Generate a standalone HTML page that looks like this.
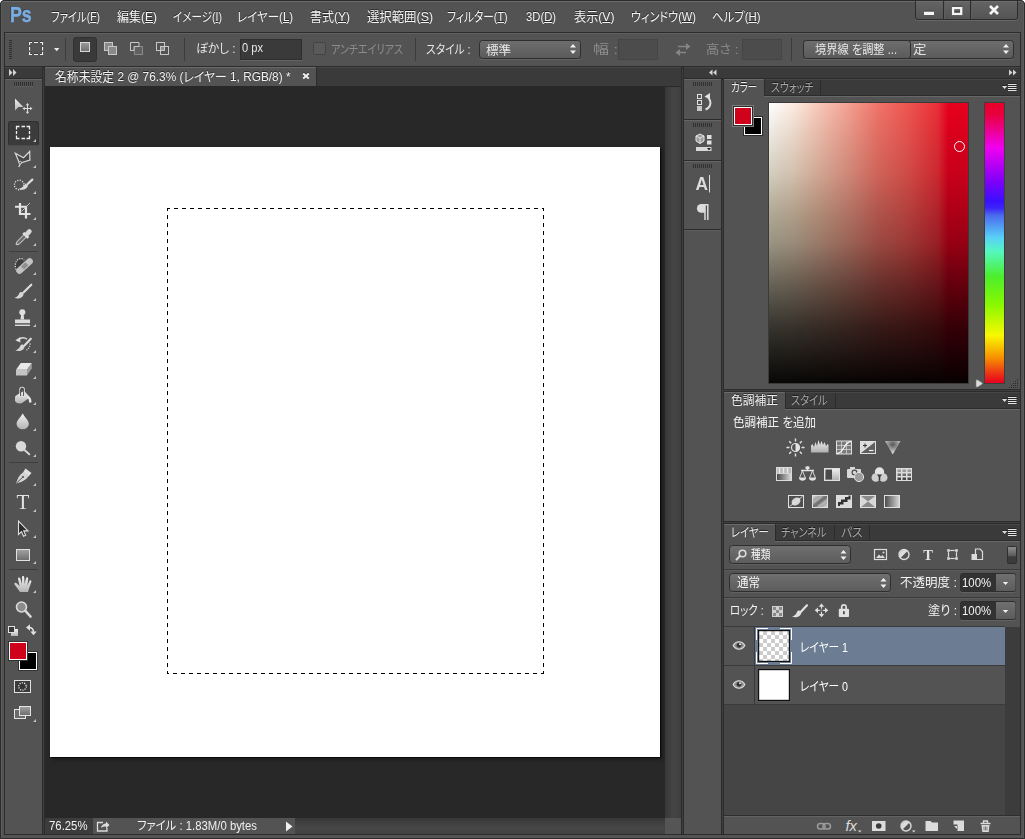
<!DOCTYPE html>
<html lang="ja">
<head>
<meta charset="utf-8">
<title>Photoshop</title>
<style>
*{box-sizing:border-box;margin:0;padding:0}
html,body{width:1025px;height:839px;overflow:hidden;background:#535353}
body{position:relative;font-family:"Liberation Sans","Noto Sans CJK JP",sans-serif;font-size:12px;color:#e6e6e6;line-height:1}
.a{position:absolute}
.t{position:absolute;font-feature-settings:"palt";white-space:nowrap;transform-origin:0 50%;line-height:16px;height:16px}
.menu .t{top:9px;font-size:13px;color:#f4f4f4;text-shadow:0 -1px 0 rgba(0,0,0,.55)}
.sh{text-shadow:0 -1px 0 rgba(0,0,0,.55)}
u{text-decoration:underline;text-underline-offset:1px}
.sep{position:absolute;width:1px;background:#3c3c3c}
.grip{position:absolute;background:repeating-linear-gradient(90deg,#303030 0 1px,transparent 1px 2px)}
.gripv{position:absolute;background:repeating-linear-gradient(180deg,#303030 0 1px,transparent 1px 2px)}
.tool{position:absolute;left:9px;width:30px;height:24px}
.corner{position:absolute;width:0;height:0;border-left:3px solid transparent;border-bottom:3px solid #c8c8c8}
</style>
</head>
<body>
<!-- window frame -->
<div class="a" id="frame" style="left:0;top:0;width:1025px;height:839px;background:#535353;border:1px solid #2c2c2c;border-radius:4px 4px 0 0;box-shadow:inset 0 1px 0 #6a6a6a,inset 1px 0 0 #5c5c5c,inset -1px 0 0 #5c5c5c"></div>
<div class="a" style="left:0;top:0;width:4px;height:4px;background:radial-gradient(circle at 100% 100%,transparent 3.600px,#fff 4.200px)"></div>
<div class="a" style="left:1021px;top:0;width:4px;height:4px;background:radial-gradient(circle at 0 100%,transparent 3.600px,#fff 4.200px)"></div>
<div class="a" style="left:4px;top:32px;width:1017px;height:803px;border:1px solid #2c2c2c;background:#2c2c2c"></div>
<!-- window buttons -->
<div class="a" style="left:915px;top:0;width:103px;height:20px;background:linear-gradient(180deg,#646464,#545454);border:1px solid #2c2c2c;border-radius:0 0 3px 3px;box-shadow:0 1px 0 #676767, inset 0 1px 0 #6e6e6e"></div>
<div class="a" style="left:943px;top:1px;width:1px;height:18px;background:#2c2c2c;box-shadow:1px 0 0 #5e5e5e"></div>
<div class="a" style="left:970px;top:1px;width:1px;height:18px;background:#2c2c2c;box-shadow:1px 0 0 #5e5e5e"></div>
<svg class="a" style="left:915px;top:0" width="103" height="20" viewBox="915 0 103 20" fill="none">
  <rect x="924" y="10.700" width="10" height="1" fill="#2a2a2a" opacity="0.600"/><rect x="924" y="11.700" width="10" height="3.300" fill="#f4f4f4"/>
  <rect x="953.100" y="8" width="8.100" height="5.900" stroke="#f4f4f4" stroke-width="2.300"/>
  <path d="M952 6.200h10.300M954.400 11.900h5.300" stroke="#2a2a2a" stroke-width="1" opacity="0.600"/>
  <path d="M990 6l8 8M998 6l-8 8" stroke="#f4f4f4" stroke-width="2.600"/>
</svg>

<!-- MENU BAR -->
<div class="a menu" id="menubar" style="left:0;top:0;width:1025px;height:32px">
  <div class="t" style="transform:scaleX(0.8020);left:10.15px;top:3px;height:24px;line-height:24px;font-size:22px;font-weight:bold;color:#78aee4;-webkit-text-stroke:0.4px #78aee4;text-shadow:-1px -1px 0 rgba(0,0,0,.3)">Ps</div>
  <div class="t" style="transform:scaleX(0.7947);left:51.00px;">ファイル(<u>F</u>)</div>
  <div class="t" style="transform:scaleX(0.9231);left:117.05px;">編集(<u>E</u>)</div>
  <div class="t" style="transform:scaleX(0.8116);left:173.00px;">イメージ(<u>I</u>)</div>
  <div class="t" style="transform:scaleX(0.8840);left:237.25px;">レイヤー(<u>L</u>)</div>
  <div class="t" style="transform:scaleX(0.9231);left:310.05px;">書式(<u>Y</u>)</div>
  <div class="t" style="transform:scaleX(0.9518);left:367.00px;">選択範囲(<u>S</u>)</div>
  <div class="t" style="transform:scaleX(0.8223);left:447.15px;">フィルター(<u>T</u>)</div>
  <div class="t" style="transform:scaleX(0.8658);left:526.05px;">3D(<u>D</u>)</div>
  <div class="t" style="transform:scaleX(0.9342);left:574.00px;">表示(<u>V</u>)</div>
  <div class="t" style="transform:scaleX(0.8529);left:631.15px;">ウィンドウ(<u>W</u>)</div>
  <div class="t" style="transform:scaleX(0.8765);left:712.10px;">ヘルプ(<u>H</u>)</div>
</div>

<!-- OPTIONS BAR -->
<div class="a" id="optbar" style="left:5px;top:32px;width:1016px;height:35px;background:#535353;border-top:1px solid #2c2c2c;border-bottom:1px solid #2c2c2c;border-right:1px solid #2c2c2c;box-shadow:inset 0 1px 0 #606060"></div>
<div class="a" id="opt" style="left:0;top:0;width:1025px;height:67px">
  <div class="gripv" style="left:9px;top:40px;width:3px;height:20px"></div>
  <svg class="a" style="left:0;top:32px" width="1025" height="35" viewBox="0 32 1025 35" fill="none">
    <defs>
      <linearGradient id="gb" x1="0" y1="0" x2="0" y2="1"><stop offset="0" stop-color="#9a9a9a"/><stop offset="1" stop-color="#707070"/></linearGradient>
      <linearGradient id="gdd" x1="0" y1="0" x2="0" y2="1"><stop offset="0" stop-color="#6e6e6e"/><stop offset="1" stop-color="#5a5a5a"/></linearGradient>
    </defs>
    <path d="M29 41.500h3M34 41.500h4M40 41.500h3M29 53.500h3M34 53.500h4M40 53.500h3M28.500 42v3M28.500 47v3.500M28.500 52v2M41.500 42v3M41.500 47v3.500M41.500 52v2" stroke="#2e2e2e" stroke-width="1" opacity="0.700"/><path d="M29 42.500h3M34 42.500h4M40 42.500h3M29 54.500h3M34 54.500h4M40 54.500h3M29.500 42v3M29.500 47v3.500M29.500 52v3M42.500 42v3M42.500 47v3.500M42.500 52v3" stroke="#f0f0f0" stroke-width="1.200"/>
    <path d="M54 48h5.400l-2.700 3.200z" fill="#ececec"/>
    <!-- selected mode button -->
    <rect x="73.500" y="37.500" width="23" height="24" rx="2.500" fill="#3a3a3a" stroke="#303030"/>
    <rect x="80.500" y="42.500" width="9" height="9" fill="url(#gb)" stroke="#d8d8d8"/>
    <!-- add -->
    <rect x="104.500" y="42.500" width="8" height="8" fill="#8a8a8a" stroke="#c8c8c8"/>
    <rect x="108.500" y="46.500" width="8" height="8" fill="#8a8a8a" stroke="#c8c8c8"/>
    <!-- subtract -->
    <rect x="134.500" y="46.500" width="8" height="8" fill="#606060" stroke="#8a8a8a"/>
    <path d="M130.500 51v-8.500h8.500" stroke="#c8c8c8"/>
    <path d="M130.500 50.500h3.500v-4h5v-4" stroke="#c8c8c8" stroke-width="1"/>
    <!-- intersect -->
    <rect x="156.500" y="42.500" width="8" height="8" stroke="#c8c8c8"/>
    <rect x="160.500" y="46.500" width="8" height="8" stroke="#c8c8c8"/>
    <rect x="161" y="47" width="3" height="3" fill="#8a8a8a"/>
    <!-- feather input -->
    <rect x="240.500" y="39.500" width="61" height="20" fill="#3a3a3a" stroke="#2e2e2e"/>
    <path d="M240 60.500h62" stroke="#646464"/>
    <!-- checkbox -->
    <rect x="313.500" y="42.500" width="12" height="12" rx="2" fill="#5a5a5a" stroke="#424242"/>
    <!-- style dropdown -->
    <rect x="479.500" y="40.500" width="101" height="18" rx="3" fill="url(#gdd)" stroke="#2e2e2e"/>
    <path d="M480 59.500h100" stroke="#626262"/>
    <path d="M570 47.500h6l-3-3.500zM570 50.500h6l-3 3.500z" fill="#f0f0f0"/>
    <!-- width box -->
    <rect x="618.500" y="39.500" width="39" height="20" fill="#4c4c4c" stroke="#454545"/>
    <!-- swap -->
    <path d="M678 46.500h10M676 52.500h10" stroke="#858585" stroke-width="1.400"/>
    <path d="M686 43l4.500 3.500l-4.500 3.500zM680 49l-4.500 3.500l4.500 3.500z" fill="#858585"/>
    <!-- height box -->
    <rect x="742.500" y="39.500" width="39" height="20" fill="#4c4c4c" stroke="#454545"/>
    <!-- right dropdown -->
    <rect x="803.500" y="40.500" width="210" height="18" rx="3" fill="url(#gdd)" stroke="#2e2e2e"/>
    <path d="M804 59.500h209" stroke="#626262"/>
    <path d="M1003 47.500h6l-3-3.500zM1003 50.500h6l-3 3.500z" fill="#f0f0f0"/>
    <!-- refine edge button -->
    <rect x="803.500" y="40.500" width="107" height="18" rx="3" fill="url(#gdd)" stroke="#2e2e2e"/>
  </svg>
  <div class="sep" style="left:65px;top:38px;height:23px"></div>
  <div class="sep" style="left:184px;top:38px;height:23px"></div>
  <div class="sep" style="left:415px;top:38px;height:23px"></div>
  <div class="sep" style="left:791px;top:38px;height:23px"></div>
  <div class="t" style="transform:scaleX(0.9322);left:196.15px;top:40.5px;font-size:12.5px;">ぼかし :</div>
  <div class="t" style="transform:scaleX(0.8883);left:242.05px;top:40px;font-size:12.5px;">0 px</div>
  <div class="t" style="transform:scaleX(0.8031);left:331.10px;top:42px;font-size:12.5px;color:#8c8c8c">アンチエイリアス</div>
  <div class="t" style="transform:scaleX(0.8601);left:426.15px;top:42px;font-size:12.5px;">スタイル :</div>
  <div class="t" style="transform:scaleX(1.0070);left:486.10px;top:42.5px;font-size:12.5px;">標準</div>
  <div class="t" style="transform:scaleX(1.2794);left:593.10px;top:41.5px;font-size:12.5px;color:#8c8c8c">幅 :</div>
  <div class="t" style="transform:scaleX(1.0630);left:706.35px;top:41.5px;font-size:12.5px;color:#8c8c8c">高さ :</div>
  <div class="t" style="transform:scaleX(0.8977);left:815.15px;top:41.5px;font-size:12.5px;">境界線 を調整 ...</div>
  <div class="t" style="transform:scaleX(1.0739);left:913.10px;top:42px;font-size:12.5px;">定</div>
</div>

<!-- TOOLS PANEL -->
<div class="a" id="tools" style="left:5px;top:67px;width:38px;height:767px;background:#535353;border-right:1px solid #2c2c2c">
  <div class="a" style="left:0;top:0;width:37px;height:11px;background:#3a3a3a;border-top:1px solid #454545"></div>
  <div class="a" style="left:0;top:11px;width:37px;height:1px;background:#2c2c2c"></div>
  <div class="a" style="left:0;top:12px;width:37px;height:1px;background:#656565"></div>
  <svg class="a" style="left:4px;top:2px" width="8" height="7" viewBox="0 0 8 7"><path d="M0 0L3.5 3.5L0 7zM4 0L7.5 3.5L4 7z" fill="#d4d4d4"/></svg>
  <div class="grip" style="left:9px;top:15px;width:20px;height:4px"></div>
  <div class="a" style="left:9px;top:19px;width:20px;height:1px;background:repeating-linear-gradient(90deg,#6a6a6a 0 1px,transparent 1px 2px)"></div>
  <!-- selected tool bg -->
  <div class="a" style="left:3px;top:54px;width:31px;height:25px;background:#3b3b3b;border-radius:3px;border:1px solid #303030;border-bottom-color:#4a4a4a"></div>
  <!-- separators -->
  <div class="a" style="left:4px;top:184px;width:29px;height:1px;background:#3e3e3e"></div>
  <div class="a" style="left:4px;top:395px;width:29px;height:1px;background:#3e3e3e"></div>
  <div class="a" style="left:4px;top:502px;width:29px;height:1px;background:#3e3e3e"></div>
  <svg class="a" style="left:0;top:0" width="38" height="768" viewBox="5 67 38 768" fill="none">
    <defs>
      <linearGradient id="gm" x1="0" y1="0" x2="0" y2="1"><stop offset="0" stop-color="#f2f2f2"/><stop offset="1" stop-color="#b4b4b4"/></linearGradient>
    </defs>
    <!-- move -->
    <path d="M15 98.5V110.5L18.5 107H23.5z" fill="url(#gm)"/>
    <path d="M27.500 104v9M23 108.500h9" stroke="#dcdcdc" stroke-width="1"/>
    <path d="M25.800 105.300l1.700-2.300l1.700 2.300zM25.800 111.700l1.700 2.300l1.700-2.300zM24.800 106.800l-2.300 1.700l2.300 1.700zM30.200 106.800l2.300 1.700l-2.300 1.700z" fill="#dcdcdc"/>
    <!-- marquee -->
    <path d="M16 126.500h3.500M21.500 126.500h3.500M26.500 126.500h3.500M16 138.500h3.500M21.500 138.500h3.500M26.500 138.500h3.500M16.500 126v3.500M16.500 131v3M16.500 135.500v3.500M29.500 126v3.500M29.500 131v3M29.500 135.500v3.500" stroke="#efefef" stroke-width="1.300"/>
    <!-- lasso poly -->
    <path d="M15.300 153.200L23.500 157.700L29.700 151.500L29.900 160L19.500 163.300z" stroke="#dcdcdc" stroke-width="1.200" fill="#474747"/>
    <path d="M20.500 163.500L18.700 167" stroke="#dcdcdc" stroke-width="1.200"/>
    <circle cx="20.300" cy="162.600" r="1.300" stroke="#dcdcdc" stroke-width="0.900" fill="#535353"/>
    <!-- quick select -->
    <circle cx="19.200" cy="185" r="4.800" stroke="#f0f0f0" stroke-width="1.300" stroke-dasharray="1.100 1.410"/>
    <path d="M32.300 179.600L27.600 184" stroke="#dcdcdc" stroke-width="2.300" stroke-linecap="round"/>
    <path d="M18.300 188.700c3.500-0.300 5.800-2.300 7.200-5.200l2.600 2.200c-1 3.300-5.300 5.200-9.800 3z" fill="#dadada"/>
    <!-- crop -->
    <path d="M20 203V214H30.500M15 206.750H26V218.500" stroke="#e4e4e4" stroke-width="2.200"/>
    <path d="M30 203L21.500 211.500" stroke="#d0d0d0" stroke-width="0.900"/>
    <!-- eyedropper -->
    <path d="M25 233.500L17.300 241.300L16 244.200L16.800 245L19.700 243.700L27.500 236z" stroke="#dedede" stroke-width="1" fill="#6e6e6e"/>
    <path d="M23.300 232.800l5 5" stroke="#e4e4e4" stroke-width="2.600"/>
    <path d="M26.800 234.200l2.600-2.800" stroke="#d8d8d8" stroke-width="4.600" stroke-linecap="round"/>
    <!-- healing -->
    <path d="M17.500 271.500a5.200 6.800 0 0 1 6.500-11.500z" fill="#3e3e3e"/>
    <path d="M17.500 271.500a5.200 6.800 0 0 1 6.500-11.500" stroke="#f0f0f0" stroke-width="1.200" stroke-dasharray="1.100 1.300"/>
    <path d="M19.500 270.700L29.700 261.300" stroke="#c2c2c2" stroke-width="6.400" stroke-linecap="round"/>
    <path d="M22.300 268.200l4.700-4.400" stroke="#9a9a9a" stroke-width="4.500"/>
    <path d="M22.600 266.500l3.600-3.300M23.900 267.800l3.500-3.200" stroke="#6c6c6c" stroke-width="0.900" stroke-dasharray="0.900 0.900"/>
    <!-- brush -->
    <path d="M31.300 284.700L23.500 292.500" stroke="#dedede" stroke-width="2.100" stroke-linecap="round"/>
    <path d="M14.300 297.800c2.500-0.500 4-2 5-4.500c0.800-1.500 2.500-1.800 3.500-0.800c1.200 1.200 0.800 2.800-0.300 4c-2.200 2.200-5.800 2.600-8.200 1.300z" fill="#d6d6d6"/>
    <!-- stamp -->
    <circle cx="22.300" cy="312.200" r="3" fill="#e0e0e0"/>
    <path d="M21.200 314h2.300l0.700 5.500h-3.700z" fill="#e0e0e0"/>
    <rect x="15" y="319.500" width="15" height="3.700" fill="#dcdcdc"/>
    <rect x="15" y="324.600" width="15" height="1.400" fill="#dcdcdc"/>
    <!-- history brush -->
    <path d="M30.800 338.700L24.500 345.500" stroke="#dedede" stroke-width="2.100" stroke-linecap="round"/>
    <path d="M15.300 350.300c2.500-0.500 4-2 5-4.500c0.800-1.500 2.500-1.800 3.500-0.800c1.200 1.200 0.800 2.800-0.300 4c-2.200 2.200-5.800 2.600-8.200 1.300z" fill="#d6d6d6"/>
    <path d="M18.500 339.500c2.500-2 6-2 8.500-0.300" stroke="#dcdcdc" stroke-width="1.400"/>
    <path d="M15.300 340.300l5-3.300v5.500z" fill="#dcdcdc"/>
    <path d="M26.500 350c2-1 3.500-3.500 3.500-6.500" stroke="#f0f0f0" stroke-width="1.200" stroke-dasharray="1 1.200"/>
    <!-- eraser -->
    <path d="M20.800 363h11l-4.800 6.700h-11z" fill="#e8e8e8"/>
    <path d="M16 369.700h11v5.800h-11z" fill="#c4c4c4"/>
    <path d="M27 369.700l4.800-6.700v5.300l-4.800 7.200z" fill="#9c9c9c"/>
    <!-- bucket -->
    <path d="M15 397.500c0-1 0.500-1.500 1.500-2.200l7.500-4.500l6 6.500l-7.500 5.500c-2 1.300-7.500 0.500-7.500-2.300z" fill="url(#gm)"/>
    <path d="M20 396.500v-7a2.100 2.100 0 0 1 4.200 0v7.500" stroke="#ececec" stroke-width="1.300"/>
    <path d="M20.600 396v-6.500a1.500 1.500 0 0 1 3 0v6.500" stroke="#3c3c3c" stroke-width="0.900"/>
    <path d="M27.500 396c2.500 0.500 4 2.500 4 5.500a1.300 1.300 0 0 1-2.600 0c0-1.800-0.200-3-2-3.800z" fill="#e8e8e8"/>
    <!-- blur -->
    <path d="M22.700 413.500c2 3.700 6.100 6.500 6.100 10.500a6.100 5.200 0 0 1-12.200 0c0-4 4.100-6.800 6.100-10.500z" fill="url(#gm)"/>
    <!-- dodge -->
    <circle cx="21" cy="446.300" r="5.200" fill="#d8d8d8"/>
    <path d="M24.500 450l4.800 4.300" stroke="#d8d8d8" stroke-width="1.900" stroke-linecap="round"/>
    <!-- pen -->
    <path d="M25.500 468.500l6 4.500l-3 3.500l-5.500-4z" fill="#e0e0e0"/>
    <path d="M23.500 472l5 3.800c-1 3-5 6-12.500 7.700c1.500-5 3.500-9 7.500-11.500z" fill="#d4d4d4"/>
    <path d="M16.500 483l6-5.500" stroke="#535353" stroke-width="1"/>
    <circle cx="23" cy="477" r="1.100" fill="#535353"/>
    <!-- T -->
    <text x="23" y="509.200" font-family="'Liberation Serif',serif" font-size="21" text-anchor="middle" fill="#e4e4e4">T</text>
    <!-- path select -->
    <path d="M18.500 521v13.500l3-2.800l2 4.500l2.200-1l-2-4.300h4.300z" fill="#2a2a2a" stroke="#e0e0e0" stroke-width="1.100"/>
    <!-- rectangle -->
    <rect x="16.500" y="549.500" width="13" height="11" fill="url(#gr)" stroke="#e0e0e0" stroke-width="1"/>
    <linearGradient id="gr" x1="0" y1="0" x2="0" y2="1"><stop offset="0" stop-color="#a2a2a2"/><stop offset="1" stop-color="#6c6c6c"/></linearGradient>
    <!-- hand -->
    <path d="M20 592L14.600 584.600c-0.800-1.200 0.600-2.400 1.700-1.500L19.600 586L18 578.800c-0.300-1.500 1.800-2 2.200-0.500L22 584L22 577c0-1.500 2.200-1.500 2.200 0L24.600 584L26 578.200c0.400-1.500 2.500-1 2.200 0.500L27.400 585.500L29.300 581c0.600-1.400 2.600-0.600 2.100 0.800C30 586 28.800 589 28 592z" fill="url(#gm)"/>
    <!-- zoom -->
    <circle cx="21.500" cy="607" r="5" fill="#8c8c8c" stroke="#dcdcdc" stroke-width="1.600"/>
    <path d="M25.500 611l5 5.500" stroke="#dcdcdc" stroke-width="2.600" stroke-linecap="round"/>
    <!-- default colours / swap -->
    <rect x="11" y="629" width="7" height="7" fill="url(#gm)"/>
    <rect x="8.500" y="626.500" width="6" height="6" fill="#3a3a3a" stroke="#e0e0e0" stroke-width="1"/>
    <path d="M29 627.500c3 0 4.500 1.500 4.500 5" stroke="#e0e0e0" stroke-width="1.600"/>
    <path d="M26 627.500l4-3.200v6.400zM30.300 631.500h6.400l-3.200 3.800z" fill="#e0e0e0"/>
    <!-- bg/fg colours -->
    <rect x="18.500" y="651.500" width="19" height="19" stroke="#333" fill="none"/><rect x="19.500" y="652.500" width="17" height="17" fill="#000" stroke="#fff" stroke-width="1"/>
    <rect x="8.500" y="641.500" width="19" height="19" stroke="#333" fill="none"/><rect x="9.500" y="642.500" width="17" height="17" fill="#d0021b" stroke="#fff" stroke-width="1"/>
    
    <!-- quick mask -->
    <rect x="14.500" y="680.500" width="16" height="12" stroke="#e0e0e0" stroke-width="1" fill="#3c3c3c"/>
    <circle cx="22.500" cy="686.500" r="3.700" stroke="#f4f4f4" stroke-width="1.300" stroke-dasharray="1.100 1.224" fill="#333"/>
    <!-- screen mode -->
    <rect x="14.500" y="709.500" width="11" height="9" stroke="#e4e4e4" stroke-width="1" fill="#6c6c6c"/>
    <rect x="19.500" y="706.500" width="11" height="9" stroke="#e4e4e4" stroke-width="1" fill="url(#gr)"/>
    <!-- corner markers -->
    <g fill="#c4c4c4">
      <path d="M36 139v3h-3zM36 165v3h-3zM36 191v3h-3zM36 217v3h-3zM36 243v3h-3zM36 272v3h-3zM36 298v3h-3zM36 324v3h-3zM36 350v3h-3zM36 376v3h-3zM36 402v3h-3zM36 428v3h-3zM36 454v3h-3zM36 483v3h-3zM36 509v3h-3zM36 535v3h-3zM36 561v3h-3zM36 590v3h-3zM36 719v3h-3z"/>
    </g>
  </svg>
</div>

<!-- DOCUMENT -->
<div class="a" id="doc" style="left:44px;top:67px;width:639px;height:768px;background:#282828;border-left:1px solid #2c2c2c;border-right:2px solid #2c2c2c;border-bottom:1px solid #2c2c2c">
</div>
<div class="a" id="docin" style="left:0;top:0;width:0;height:0">
  <!-- tab bar -->
  <div class="a" style="left:45px;top:67px;width:636px;height:19px;background:#3a3a3a;border-top:1px solid #474747"></div>
  <div class="a" style="left:45px;top:67px;width:271px;height:19px;background:#535353;border-top:1px solid #6b6b6b"></div>
  <div class="a" style="left:316px;top:67px;width:1px;height:19px;background:#2c2c2c"></div>
  <div class="t sh" style="transform:scaleX(0.9102);left:55.00px;top:69px;font-size:13px;color:#f0f0f0">名称未設定 2 @ 76.3% (レイヤー 1, RGB/8) *</div>
  <svg class="a" style="left:302px;top:72px" width="8" height="8" viewBox="0 0 8 8"><path d="M1.200 0.500L6.800 5.500M6.800 0.500L1.200 5.500" stroke="#2a2a2a" stroke-width="1.900" opacity="0.700"/><path d="M1.200 1.500L6.800 6.500M6.800 1.500L1.200 6.500" stroke="#f0f0f0" stroke-width="1.900"/></svg>
  <!-- scrollbars -->
  <div class="a" style="left:665px;top:87px;width:16px;height:731px;background:linear-gradient(90deg,#383838,#454545 55%,#3e3e3e)"></div>
  <div class="a" style="left:295px;top:818px;width:370px;height:16px;background:linear-gradient(180deg,#383838,#464646 60%,#424242)"></div>
  <div class="a" style="left:665px;top:818px;width:16px;height:16px;background:#555"></div>
  <!-- status -->
  <div class="a" style="left:45px;top:818px;width:48px;height:16px;background:#3c3c3c"></div>
  <div class="a" style="left:93px;top:818px;width:202px;height:16px;background:#535353"></div>
  <div class="t" style="transform:scaleX(0.9460);left:49.00px;top:818px;font-size:12px;color:#f0f0f0">76.25%</div>
  <div class="t" style="transform:scaleX(0.9454);left:137.10px;top:818px;font-size:12px;color:#f0f0f0">ファイル : 1.83M/0 bytes</div>
  <svg class="a" style="left:95px;top:819px" width="16" height="14" viewBox="95 819 16 14" fill="none"><path d="M103 822.500h-5.500v8.500h9.500v-3" stroke="#dcdcdc" stroke-width="1.300"/><path d="M101 828c0.500-3 2.500-4.500 5-4.500v-2l3.500 3.500l-3.500 3.500v-2c-2 0-3.500 0.200-5 1.500z" fill="#dcdcdc"/></svg>
  <svg class="a" style="left:285px;top:821px" width="8" height="11" viewBox="0 0 8 11"><path d="M1 0.500L7.500 5.500L1 10.500z" fill="#f0f0f0"/></svg>
  <!-- canvas -->
  <div class="a" style="left:50px;top:147px;width:610px;height:610px;background:#fff;box-shadow:1px 1px 0 rgba(0,0,0,.55),2px 2px 4px rgba(0,0,0,.5)"></div>
  <svg class="a" style="left:167px;top:208px" width="377" height="466" viewBox="167 208 377 466" shape-rendering="crispEdges" fill="none" stroke="#000" stroke-width="1" stroke-dasharray="4 4">
    <path d="M167 208.500H544" stroke-dashoffset="1"/>
    <path d="M167.500 208V674" stroke-dashoffset="1"/>
    <path d="M543.500 208V674" stroke-dashoffset="1"/>
    <path d="M167 673.500H544" stroke-dashoffset="2"/>
  </svg>
</div>

<!-- RIGHT DOCK -->
<div class="a" id="dock" style="left:684px;top:67px;width:336px;height:768px;background:#2c2c2c"></div>
<div class="a" id="dockin" style="left:0;top:0;width:0;height:0">
  <!-- header -->
  <div class="a" style="left:684px;top:67px;width:336px;height:11px;background:#3a3a3a;border-top:1px solid #454545"></div>
  <svg class="a" style="left:709px;top:69px" width="8" height="7" viewBox="0 0 8 7"><path d="M3.500 0.500L0 3.500L3.500 6.500zM7.500 0.500L4 3.500L7.500 6.500z" fill="#d4d4d4"/></svg>
  <svg class="a" style="left:1009px;top:69px" width="8" height="7" viewBox="0 0 8 7"><path d="M0 0.500L3.500 3.500L0 6.500zM4 0.500L7.500 3.500L4 6.500z" fill="#d4d4d4"/></svg>
  <!-- icon column -->
  <div class="a" style="left:684px;top:79px;width:37px;height:755px;background:#535353"></div>
  <div class="a" style="left:684px;top:79px;width:37px;height:1px;background:#666"></div>
  <div class="a" style="left:684px;top:119px;width:37px;height:1px;background:#2c2c2c"></div>
  <div class="a" style="left:684px;top:120px;width:37px;height:1px;background:#666"></div>
  <div class="a" style="left:684px;top:160px;width:37px;height:1px;background:#2c2c2c"></div>
  <div class="a" style="left:684px;top:161px;width:37px;height:1px;background:#666"></div>
  <div class="a" style="left:684px;top:229px;width:37px;height:1px;background:#2c2c2c"></div>
  <div class="a" style="left:684px;top:230px;width:37px;height:1px;background:#5e5e5e"></div>
  <div class="grip" style="left:693px;top:82px;width:20px;height:4px"></div>
  <div class="grip" style="left:693px;top:123px;width:20px;height:4px"></div>
  <div class="grip" style="left:693px;top:164px;width:20px;height:4px"></div>
  <svg class="a" style="left:684px;top:79px" width="37" height="160" viewBox="684 79 37 160" fill="none">
    <!-- history -->
    <rect x="697.500" y="94.500" width="4" height="4" stroke="#e0e0e0"/>
    <rect x="697.500" y="100.500" width="4" height="4" stroke="#e0e0e0"/>
    <rect x="697" y="106" width="5" height="5" fill="#c8c8c8"/>
    <path d="M705.500 109.500c4.500-1.500 6.500-6.500 3.500-11" stroke="#e0e0e0" stroke-width="1.900"/>
    <path d="M704.500 96.500l5.500-3.500v7z" fill="#e0e0e0"/>
    <!-- 3D -->
    <path d="M700 134l4 2v5l-4 2.500l-4-2.500v-5z" fill="#9a9a9a" stroke="#e8e8e8" stroke-width="1"/>
    <path d="M696 136l4 2l4-2M700 138v5.500" stroke="#e8e8e8" stroke-width="0.900"/>
    <rect x="707" y="135" width="4.500" height="4" fill="#e0e0e0"/>
    <rect x="707" y="140.500" width="4.500" height="4" fill="#e0e0e0"/>
    <rect x="696" y="147" width="15.500" height="4" fill="#d8d8d8"/>
    <path d="M707 148h4l-2 2.500z" fill="#222"/>
    <!-- A| -->
    <text x="695.500" y="190.300" font-family="'Liberation Sans',sans-serif" font-weight="bold" font-size="17.500" textLength="12.500" lengthAdjust="spacingAndGlyphs" fill="#dcdcdc">A</text>
    <path d="M709.500 175v17.500" stroke="#e0e0e0" stroke-width="1"/>
    <!-- pilcrow -->
    <path d="M701 204.800h7.500M705 204v16M707.800 204v16" stroke="#dcdcdc" stroke-width="1.500"/>
    <path d="M705 204.100h-3.800a4.300 4.300 0 0 0 0 8.600h3.800z" fill="#dcdcdc"/>
  </svg>

  <div class="a" style="left:682px;top:68px;width:1px;height:766px;background:#3e3e3e"></div>
  <div class="a" style="left:722px;top:80px;width:1px;height:754px;background:#3e3e3e"></div>
  <div class="a" style="left:43px;top:68px;width:1px;height:766px;background:#3e3e3e"></div>
  <!-- COLOR PANEL -->
  <div class="a" style="left:724px;top:79px;width:296px;height:310px;background:#535353"></div>
  <div class="a" style="left:724px;top:79px;width:296px;height:18px;background:#3a3a3a;border-top:1px solid #464646;box-shadow:inset 0 -1px 0 #676767,inset 0 -2px 0 #2c2c2c"></div>
  <div class="a" style="left:724px;top:79px;width:40px;height:18px;background:#535353;border-top:1px solid #6a6a6a"></div>
  <div class="a" style="left:764px;top:79px;width:1px;height:17px;background:#2c2c2c"></div>
  <div class="a" style="left:820px;top:80px;width:1px;height:15px;background:#2c2c2c"></div>
  <div class="t sh" style="transform:scaleX(0.7530);left:731.10px;top:80px;font-size:12.5px;color:#f0f0f0">カラー</div>
  <div class="t sh" style="transform:scaleX(0.7947);left:771.10px;top:80px;font-size:12.5px;color:#a6a6a6">スウォッチ</div>
  <!-- swatches -->
  <div class="a" style="left:743px;top:116px;width:20px;height:20px;background:#000;border:1px solid #2c2c2c;box-shadow:inset 0 0 0 1px #fff"></div>
  <div class="a" style="left:732px;top:105px;width:22px;height:22px;background:#d0021b;border:1px solid #7c7c7c;box-shadow:inset 0 0 0 1px #2c2c2c,inset 0 0 0 2px #fff"></div>
  <!-- field -->
  <div class="a" style="left:768px;top:102px;width:201px;height:282px;background:#3a3a3a"></div>
  <div class="a" style="left:769px;top:103px;width:199px;height:280px;background:linear-gradient(90deg,#fff 0%,#fcebe1 12%,#f8c8b9 25%,#f3a091 40%,#f07369 55%,#ee5550 70%,#ea2d37 85%,#e6001e 90%,#e6001e 100%)"></div>
  <div class="a" style="left:769px;top:103px;width:199px;height:280px;mix-blend-mode:multiply;background:linear-gradient(90deg,#ebe3c8 0%,#fff 70%);-webkit-mask-image:linear-gradient(180deg,transparent 0,#000 40%);mask-image:linear-gradient(180deg,transparent 0,#000 40%)"></div>
  <div class="a" style="left:769px;top:103px;width:199px;height:280px;background:linear-gradient(180deg,rgba(0,0,0,0) 0%,rgba(0,0,0,.13) 25%,rgba(0,0,0,.35) 50%,rgba(0,0,0,.57) 65%,rgba(0,0,0,.77) 80%,rgba(0,0,0,.97) 100%)"></div>
  <div class="a" style="left:954px;top:141px;width:11px;height:11px;border:1px solid #fff;border-radius:50%"></div>
  <!-- hue -->
  <div class="a" style="left:984px;top:102px;width:21px;height:282px;background:#3e3e3e"></div>
  <div class="a" style="left:985px;top:103px;width:19px;height:280px;background:linear-gradient(180deg,#e60028 0%,#e8003c 4%,#f000f0 16%,#8000f8 28%,#3a10ff 35%,#3c24f8 37.500%,#4a68ee 40%,#58d0f8 48%,#54f8c0 53%,#4cee2c 62%,#88f800 72%,#f8f800 83%,#f89000 91%,#ee3c14 96%,#e6001e 100%)"></div>
  <svg class="a" style="left:975px;top:379px" width="9" height="9" viewBox="0 0 9 9"><path d="M1 2c0-1 0.800-1.400 1.800-1l4 2.600c0.800 0.500 0.800 1.300 0 1.800l-4 2.600c-1 0.400-1.800 0-1.800-1z" fill="#dcdcdc" stroke="#7a7a7a" stroke-width="0.600"/></svg>
  <svg class="a" style="left:1008px;top:378px" width="11" height="11" viewBox="0 0 11 11" fill="#2a2a2a"><path d="M9 1h1v1h-1zM7 3h1v1h-1zM9 3h1v1h-1zM5 5h1v1h-1zM7 5h1v1h-1zM9 5h1v1h-1zM3 7h1v1h-1zM5 7h1v1h-1zM7 7h1v1h-1zM9 7h1v1h-1zM1 9h1v1h-1zM3 9h1v1h-1zM5 9h1v1h-1zM7 9h1v1h-1zM9 9h1v1h-1z"/></svg>

  <div class="a" style="left:723px;top:390px;width:297px;height:1px;background:#3e3e3e"></div>
  <div class="a" style="left:723px;top:522px;width:297px;height:1px;background:#3e3e3e"></div>
  <!-- ADJUSTMENTS PANEL -->
  <div class="a" style="left:724px;top:392px;width:296px;height:129px;background:#535353"></div>
  <div class="a" style="left:724px;top:392px;width:296px;height:18px;background:#3a3a3a;border-top:1px solid #464646;box-shadow:inset 0 -1px 0 #676767,inset 0 -2px 0 #2c2c2c"></div>
  <div class="a" style="left:724px;top:392px;width:61px;height:18px;background:#535353;border-top:1px solid #6a6a6a"></div>
  <div class="a" style="left:785px;top:392px;width:1px;height:17px;background:#2c2c2c"></div>
  <div class="a" style="left:835px;top:393px;width:1px;height:15px;background:#2c2c2c"></div>
  <div class="t sh" style="transform:scaleX(0.9402);left:731.10px;top:393px;font-size:12.5px;color:#f0f0f0">色調補正</div>
  <div class="t sh" style="transform:scaleX(0.8142);left:791.15px;top:393px;font-size:12.5px;color:#a6a6a6">スタイル</div>
  <div class="t" style="transform:scaleX(0.9226);left:733.10px;top:415px;font-size:12.5px;color:#f4f4f4">色調補正 を追加</div>

  <svg class="a" style="left:770px;top:436px" width="150" height="78" viewBox="770 436 150 78" fill="none">
    <defs>
      <linearGradient id="av" x1="0" y1="0" x2="0" y2="1"><stop offset="0" stop-color="#f0f0f0"/><stop offset="1" stop-color="#b0b0b0"/></linearGradient>
      <linearGradient id="ah" x1="0" y1="0" x2="1" y2="0"><stop offset="0" stop-color="#484848"/><stop offset="1" stop-color="#d8d8d8"/></linearGradient>
      <linearGradient id="ad" x1="0" y1="0" x2="1" y2="1"><stop offset="0" stop-color="#dcdcdc"/><stop offset="0.500" stop-color="#6e6e6e"/><stop offset="1" stop-color="#dcdcdc"/></linearGradient>
      <radialGradient id="avb" cx="0.500" cy="0.250" r="0.600"><stop offset="0" stop-color="#555"/><stop offset="1" stop-color="#d0d0d0"/></radialGradient>
    </defs>
    <!-- row 1 -->
    <g stroke="#e4e4e4" stroke-width="1.400">
      <path d="M795.500 438.500v3M795.500 453.500v3M786.500 447.500h3M801.500 447.500h3M789.200 441.200l2 2M799.800 451.800l2 2M801.800 441.200l-2 2M791.200 451.800l-2 2"/>
    </g>
    <circle cx="795.500" cy="447.500" r="4" stroke="#e4e4e4" stroke-width="1.200"/>
    <path d="M795.500 443.500a4 4 0 0 1 0 8z" fill="#e4e4e4"/>
    <path d="M811 452.500v-7l1.500-1.500l1.500 3l1.500-5l1.500 4l1.500-6l1.500 5l1.500-4l1.500 4l1.500-3l1.500 4l1.500-2l1 1v7.500z" fill="url(#av)"/>
    <rect x="836.500" y="441" width="15" height="13" fill="#7a7a7a" stroke="#e0e0e0"/>
    <path d="M836.500 445.500h15M836.500 449.500h15M841.500 441v13M846.500 441v13" stroke="#d0d0d0" stroke-width="0.800"/>
    <path d="M837 453.500c7 0 7-12 14-12" stroke="#f4f4f4" stroke-width="1.300"/>
    <rect x="860.500" y="441.500" width="15" height="12" fill="#5e5e5e" stroke="#e0e0e0"/>
    <path d="M861 453v-11h14z" fill="#dcdcdc"/>
    <path d="M863 445.500h4M865 443.500v4" stroke="#333" stroke-width="1"/>
    <path d="M869 450.500h4.500" stroke="#f0f0f0" stroke-width="1.200"/>
    <path d="M885 441h15.500l-7.750 13.500z" fill="url(#avb)"/>
    <!-- row 2 -->
    <rect x="776.500" y="467.500" width="15" height="13" fill="url(#av)" stroke="#dcdcdc"/>
    <rect x="777" y="468" width="14" height="5" fill="#b8b8b8"/>
    <path d="M779.500 468v5M783.500 468v5M787.500 468v5" stroke="#e8e8e8" stroke-width="1.500"/>
    <rect x="777" y="474" width="14" height="6" fill="url(#ah)"/>
    <path d="M807.500 466.500v4M801 470.500h13" stroke="#e4e4e4" stroke-width="1.600"/>
    <path d="M805.500 466.500h4v2.500h-4z" fill="#e4e4e4"/>
    <path d="M802.500 471l-3 7h6zM812.500 471l-3 7h6z" stroke="#e4e4e4" stroke-width="0.900"/>
    <path d="M799 478h7c0 3.500-7 3.500-7 0zM809 478h7c0 3.500-7 3.500-7 0z" fill="#e0e0e0"/>
    <rect x="824.500" y="468.500" width="15" height="12" fill="url(#av)" stroke="#e0e0e0"/>
    <rect x="825.500" y="469.500" width="6.500" height="10" fill="#4a4a4a"/>
    <rect x="847" y="469" width="14" height="9" rx="1" fill="#d8d8d8"/>
    <rect x="850" y="467" width="5" height="3" fill="#d8d8d8"/>
    <circle cx="854.500" cy="472.500" r="2.400" fill="#d8d8d8" stroke="#4a4a4a" stroke-width="1.200"/>
    <circle cx="859" cy="477" r="4.600" fill="#9c9c9c" stroke="#e4e4e4" stroke-width="1"/>
    <circle cx="879.500" cy="472" r="4.700" fill="#e4e4e4"/>
    <circle cx="875.800" cy="477.500" r="4.300" fill="#cfcfcf"/>
    <circle cx="883.200" cy="477.500" r="4.300" fill="#cfcfcf"/>
    <path d="M877 474.500h5l-1.700 2.500v3.500h-1.600v-3.500z" fill="#3c3c3c"/>
    <rect x="896" y="468" width="16" height="13" fill="#dcdcdc"/>
    <path d="M897.500 469.500h3.500v2.500h-3.500zM902.500 469.500h3.500v2.500h-3.500zM907.500 469.500h3.500v2.500h-3.500z" fill="#9a9a9a"/>
    <path d="M897.500 473.500h3.500v2.500h-3.500zM902.500 473.500h3.500v2.500h-3.500zM907.500 473.500h3.500v2.500h-3.500z" fill="#6e6e6e"/>
    <path d="M897.500 477.500h3.500v2.500h-3.500zM902.500 477.500h3.500v2.500h-3.500zM907.500 477.500h3.500v2.500h-3.500z" fill="#444"/>
    <!-- row 3 -->
    <rect x="788.500" y="495.500" width="15" height="12" fill="#4e4e4e" stroke="#e0e0e0"/>
    <path d="M789 507v-11h14z" fill="#cfcfcf" opacity="0.001"/>
    <ellipse cx="796" cy="501.500" rx="4.800" ry="3.600" transform="rotate(-35 796 501.500)" fill="#d4d4d4"/>
    <path d="M789.500 506.500l13-10" stroke="#e8e8e8" stroke-width="0.900"/>
    <rect x="812.500" y="495.500" width="15" height="12" fill="url(#ad)" stroke="#e0e0e0"/>
    <path d="M813 503l9-7M818 507l9.500-7" stroke="#bdbdbd" stroke-width="2.200" opacity="0.700"/>
    <rect x="836.500" y="495.500" width="15" height="12" fill="#dcdcdc" stroke="#e0e0e0"/>
    <path d="M838 506v-4h3v-2.500h4v-2.500h3.500v-1.500h2v4h-3v2.500h-4v2.500h-3.500v1.500z" fill="#333"/>
    <rect x="860.500" y="495.500" width="15" height="12" fill="#8a8a8a" stroke="#e0e0e0"/>
    <path d="M861 496l7 5.500l-7 5.500zM875 496l-7 5.500l7 5.500z" fill="#d8d8d8"/>
    <rect x="884.500" y="495.500" width="15" height="12" fill="url(#ah)" stroke="#e0e0e0"/>
  </svg>

  <!-- LAYERS PANEL -->
  <div class="a" style="left:724px;top:524px;width:296px;height:310px;background:#535353"></div>
  <div class="a" style="left:724px;top:524px;width:296px;height:18px;background:#3a3a3a;border-top:1px solid #464646;box-shadow:inset 0 -1px 0 #676767,inset 0 -2px 0 #2c2c2c"></div>
  <div class="a" style="left:724px;top:524px;width:51px;height:18px;background:#535353;border-top:1px solid #6a6a6a"></div>
  <div class="a" style="left:775px;top:524px;width:1px;height:17px;background:#2c2c2c"></div>
  <div class="a" style="left:834px;top:525px;width:1px;height:15px;background:#2c2c2c"></div>
  <div class="a" style="left:869px;top:525px;width:1px;height:15px;background:#2c2c2c"></div>
  <div class="t sh" style="transform:scaleX(0.8229);left:731.10px;top:525px;font-size:12.5px;color:#f0f0f0">レイヤー</div>
  <div class="t sh" style="transform:scaleX(0.8125);left:781.15px;top:525px;font-size:12.5px;color:#a6a6a6">チャンネル</div>
  <div class="t sh" style="transform:scaleX(0.9420);left:841.15px;top:525px;font-size:12.5px;color:#a6a6a6">パス</div>
  <svg class="a" style="left:724px;top:541px" width="296px" height="294" viewBox="724 541 296 294" fill="none">
    <defs>
      <linearGradient id="ldd" x1="0" y1="0" x2="0" y2="1"><stop offset="0" stop-color="#707070"/><stop offset="1" stop-color="#5c5c5c"/></linearGradient>
      <linearGradient id="lsw" x1="0" y1="0" x2="0" y2="1"><stop offset="0" stop-color="#909090"/><stop offset="0.550" stop-color="#5a5a5a"/><stop offset="0.600" stop-color="#3c3c3c"/><stop offset="1" stop-color="#3a3a3a"/></linearGradient>
      <pattern id="chk" x="759" y="631" width="8" height="8" patternUnits="userSpaceOnUse"><rect width="8" height="8" fill="#fff"/><rect x="4" width="4" height="4" fill="#ccc"/><rect y="4" width="4" height="4" fill="#ccc"/></pattern>
    </defs>
    <!-- filter row -->
    <rect x="729.500" y="545.500" width="121" height="18" rx="3" fill="url(#ldd)" stroke="#2e2e2e"/>
    <path d="M731 564.500h118" stroke="#626262"/>
    <circle cx="742.500" cy="553.500" r="3.300" stroke="#dcdcdc" stroke-width="1.600"/>
    <path d="M740 556l-3.500 3.500" stroke="#dcdcdc" stroke-width="2" stroke-linecap="round"/>
    <path d="M840.500 553.500h6l-3-3.500zM840.500 556.500h6l-3 3.500z" fill="#f0f0f0"/>
    <rect x="874.500" y="549.500" width="12" height="10" stroke="#dcdcdc" stroke-width="1.200"/>
    <path d="M876 558l3-3.500l2 2l1.500-1.500l2.500 3z" fill="#dcdcdc"/>
    <circle cx="883.500" cy="552.500" r="1" fill="#dcdcdc"/>
    <circle cx="904" cy="554.500" r="5" stroke="#dcdcdc" stroke-width="1.400"/>
    <path d="M900.500 558a5 5 0 0 1 7-7z" fill="#dcdcdc"/>
    <text x="928" y="560" font-family="'Liberation Serif',serif" font-weight="bold" font-size="14.500" text-anchor="middle" fill="#e4e4e4">T</text>
    <rect x="948.500" y="550.500" width="8" height="8" stroke="#dcdcdc" stroke-width="1.200"/>
    <path d="M947 549h3v3h-3zM955 549h3v3h-3zM947 557h3v3h-3zM955 557h3v3h-3z" fill="#dcdcdc" stroke="#535353" stroke-width="0.400"/>
    <path d="M975.500 549h4.500l2.500 2.500v8h-7z" stroke="#dcdcdc" stroke-width="1.200"/>
    <rect x="971.500" y="554" width="5.500" height="6" fill="#dcdcdc"/>
    <rect x="1007.500" y="546.500" width="9" height="17" rx="1" fill="url(#lsw)" stroke="#2e2e2e"/>
    <!-- separators -->
    <path d="M724 569.500h296M724 597.500h296" stroke="#3a3a3a"/>
    <path d="M724 570.500h296M724 598.500h296" stroke="#5c5c5c"/>
    <!-- blend row -->
    <rect x="729.500" y="573.500" width="161" height="18" rx="3" fill="url(#ldd)" stroke="#2e2e2e"/>
    <path d="M731 592.500h158" stroke="#626262"/>
    <path d="M880.500 581.500h6l-3-3.500zM880.500 584.500h6l-3 3.500z" fill="#f0f0f0"/>
    <rect x="960.500" y="573.500" width="55" height="18" rx="2" fill="#323232" stroke="#2e2e2e"/>
    <path d="M996 574h17.500a2 2 0 0 1 2 2v13a2 2 0 0 1 -2 2h-17.500z" fill="url(#ldd)"/>
    <path d="M961 592.500h54" stroke="#626262"/>
    <path d="M1002.800 582h5.400l-2.700 3z" fill="#f0f0f0"/>
    <!-- fill row -->
    <rect x="960.500" y="601.500" width="55" height="18" rx="2" fill="#323232" stroke="#2e2e2e"/>
    <path d="M996 602h17.500a2 2 0 0 1 2 2v13a2 2 0 0 1 -2 2h-17.500z" fill="url(#ldd)"/>
    <path d="M961 620.500h54" stroke="#626262"/>
    <path d="M1002.800 610h5.400l-2.700 3z" fill="#f0f0f0"/>
    <!-- lock icons -->
    <rect x="772" y="606" width="11" height="11" fill="#d0d0d0"/>
    <path d="M773 607h3v3h-3zM779 607h3v3h-3zM776 610h3v3h-3zM773 613h3v3h-3zM779 613h3v3h-3z" fill="#8a8a8a"/>
    <path d="M807 605.300L800.700 612" stroke="#e2e2e2" stroke-width="2.200" stroke-linecap="round"/>
    <path d="M792 616.500c2.500-0.500 4-2 5-4.500c0.800-1.500 2.500-1.800 3.500-0.800c1.200 1.200 0.800 2.800-0.300 4c-2.200 2.200-5.800 2.600-8.200 1.300z" fill="#e0e0e0"/>
    <path d="M821.500 604.500v11.500M815.700 610.300h11.600" stroke="#e0e0e0" stroke-width="1.200"/>
    <path d="M818.700 606.700l2.800-3.300l2.800 3.300zM818.700 613.900l2.800 3.300l2.800-3.300zM818 607.500l-3.300 2.800l3.300 2.800zM825 607.500l3.300 2.800l-3.300 2.800z" fill="#e0e0e0"/>
    <rect x="819.800" y="608.600" width="3.400" height="3.400" fill="#3a3a3a" opacity="0.600"/>
    <rect x="838.800" y="608.800" width="10.200" height="8.200" rx="0.800" fill="#e0e0e0"/>
    <path d="M841.700 609v-2a2.200 2.200 0 0 1 4.400 0v2" stroke="#e0e0e0" stroke-width="1.700"/>
    <rect x="843.100" y="611.200" width="1.600" height="3" fill="#3a3a3a"/>
    <!-- list -->
    <rect x="724" y="627" width="296" height="189" fill="#454545"/>
    <rect x="1005" y="627" width="15" height="189" fill="#3c3c3c"/>
    <rect x="724" y="627" width="281" height="39" fill="#535353"/>
    <rect x="755" y="627" width="250" height="38" fill="#6b7c93"/>
    <rect x="724" y="666" width="281" height="39" fill="#535353"/>
    <path d="M724 626.500h281M724 665.500h281M724 704.500h281" stroke="#3a3a3a"/>
    <path d="M754.500 627v78" stroke="#3a3a3a"/>
    <!-- thumbs -->
    <rect x="759" y="631" width="30" height="30" fill="url(#chk)"/>
    <rect x="758.600" y="630.600" width="30.800" height="30.800" stroke="#111" stroke-width="1.200"/>
    <path d="M756.500 640v-11.500h11.500M780 628.500h11.500v11.500M791.500 652v11.500h-11.500M768 663.500h-11.500v-11.500" stroke="#fff" stroke-width="1"/>
    <rect x="758.600" y="669.600" width="30.800" height="30.800" fill="#fff" stroke="#111" stroke-width="1.200"/>
    <!-- eyes -->
    <g id="eye">
      <path d="M733.200 645.500c2.600-5 9-5 11.600 0c-2.600 5-9 5-11.600 0z" fill="#8e8e8e" stroke="#dedede" stroke-width="1.200"/>
      <circle cx="739" cy="645.300" r="2.400" fill="#333"/>
      <circle cx="740" cy="644.300" r="1" fill="#e8e8e8"/>
    </g>
    <use href="#eye" y="39"/>
    <!-- bottom bar -->
    <rect x="724" y="816" width="296" height="18" fill="#535353"/>
    <path d="M724 816.500h296" stroke="#636363"/>
    <path d="M724 815.500h296" stroke="#2e2e2e"/>
    <g stroke="#9a9a9a" stroke-width="1.500">
      <rect x="817.500" y="823.500" width="7.500" height="5.500" rx="2.750"/>
      <rect x="823" y="823.500" width="7.500" height="5.500" rx="2.750"/>
    </g>
    <text x="845.500" y="830.500" font-family="'Liberation Sans',sans-serif" font-style="italic" font-size="14.500" textLength="11.500" lengthAdjust="spacingAndGlyphs" fill="#dcdcdc">fx</text>
    <path d="M858 830.500h3.500l-1.750 2z" fill="#dcdcdc"/>
    <rect x="872" y="821" width="13.500" height="10" fill="#dcdcdc"/>
    <circle cx="878.750" cy="826" r="2.800" fill="#3a3a3a"/>
    <circle cx="906" cy="826" r="5" stroke="#dcdcdc" stroke-width="1.400"/>
    <path d="M902.500 829.500a5 5 0 0 1 7-7z" fill="#dcdcdc"/>
    <path d="M912 830.500h3.500l-1.750 2z" fill="#dcdcdc"/>
    <path d="M925.500 821h5l1.500 1.500h6v8.500h-12.500z" fill="#dcdcdc"/>
    <path d="M953.500 820.500h10.500v10.500h-6.500v-6.500h-4z" fill="#dcdcdc"/>
    <path d="M954 826l3 3v-3z" fill="#dcdcdc"/>
    <path d="M980.500 823.500h10M983.500 823v-2h4v2" stroke="#dcdcdc" stroke-width="1.300"/>
    <path d="M981.500 825h8l-0.800 7h-6.400z" fill="#dcdcdc"/>
    <path d="M984 826.500v4M985.500 826.500v4M987 826.500v4" stroke="#535353" stroke-width="0.700"/>
  </svg>
  <div class="t" style="transform:scaleX(0.7711);left:751.00px;top:546.500px;font-size:12.5px;color:#f4f4f4">種類</div>
  <div class="t" style="transform:scaleX(0.9213);left:737.00px;top:574.500px;font-size:12.5px;color:#f4f4f4">通常</div>
  <div class="t" style="transform:scaleX(1.0021);left:900.10px;top:574.500px;font-size:12.5px;color:#f4f4f4">不透明度 :</div>
  <div class="t" style="transform:scaleX(0.9496);left:962.36px;top:575px;font-size:12px;color:#f4f4f4">100%</div>
  <div class="t" style="transform:scaleX(0.8360);left:730.10px;top:603px;font-size:12.5px;color:#f4f4f4">ロック :</div>
  <div class="t" style="transform:scaleX(0.9725);left:928.00px;top:602.500px;font-size:12.5px;color:#f4f4f4">塗り :</div>
  <div class="t" style="transform:scaleX(0.9496);left:962.36px;top:603px;font-size:12px;color:#f4f4f4">100%</div>
  <div class="t" style="transform:scaleX(0.8547);left:800.10px;top:640px;font-size:12.5px;color:#fff">レイヤー 1</div>
  <div class="t" style="transform:scaleX(0.8547);left:800.10px;top:679px;font-size:12.5px;color:#fff">レイヤー 0</div>
  <!-- panel menu icons -->
  <svg class="a" style="left:1001px;top:83px" width="17" height="10" viewBox="0 0 17 10"><path d="M1 2.500h5.200M7 0.500h8.500M7 2.500h8.500M7 4.500h8.500M7 6.500h8.500" stroke="#262626" stroke-width="1"/><path d="M1 3h5.200l-2.600 3z" fill="#dedede"/><path d="M7 1.500h8.500M7 3.500h8.500M7 5.500h8.500M7 7.500h8.500" stroke="#e4e4e4" stroke-width="1"/></svg>
  <svg class="a" style="left:1001px;top:396px" width="17" height="10" viewBox="0 0 17 10"><path d="M1 2.500h5.200M7 0.500h8.500M7 2.500h8.500M7 4.500h8.500M7 6.500h8.500" stroke="#262626" stroke-width="1"/><path d="M1 3h5.200l-2.600 3z" fill="#dedede"/><path d="M7 1.500h8.500M7 3.500h8.500M7 5.500h8.500M7 7.500h8.500" stroke="#e4e4e4" stroke-width="1"/></svg>
  <svg class="a" style="left:1001px;top:528px" width="17" height="10" viewBox="0 0 17 10"><path d="M1 2.500h5.200M7 0.500h8.500M7 2.500h8.500M7 4.500h8.500M7 6.500h8.500" stroke="#262626" stroke-width="1"/><path d="M1 3h5.200l-2.600 3z" fill="#dedede"/><path d="M7 1.500h8.500M7 3.500h8.500M7 5.500h8.500M7 7.500h8.500" stroke="#e4e4e4" stroke-width="1"/></svg>
</div>

</body>
</html>
